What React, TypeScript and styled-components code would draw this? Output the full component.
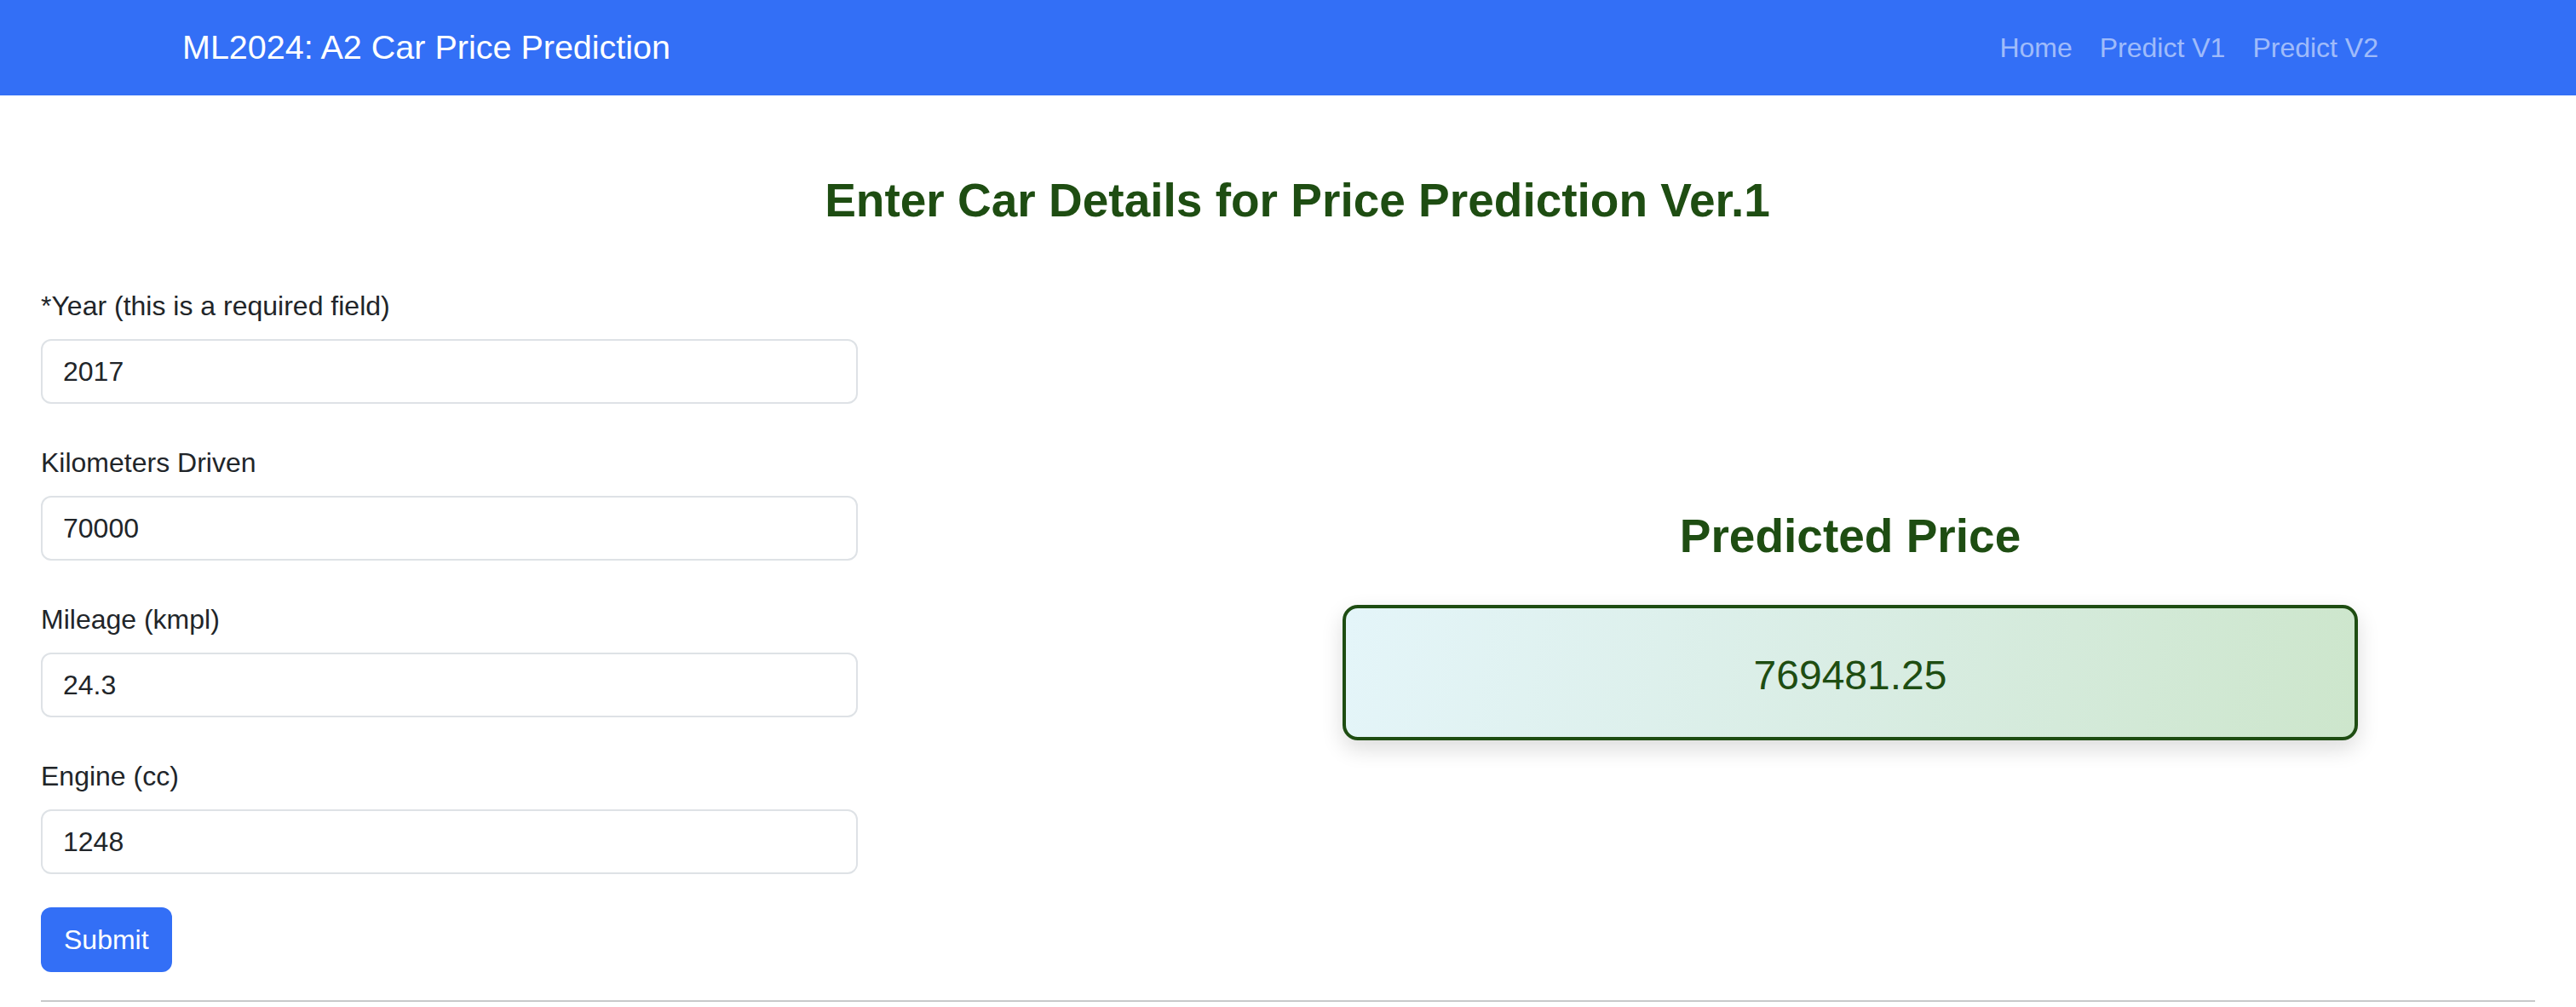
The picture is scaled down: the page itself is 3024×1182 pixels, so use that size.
import React from "react";
import styled, { createGlobalStyle } from "styled-components";

const GlobalStyle = createGlobalStyle`
  html, body {
    margin: 0;
    padding: 0;
    background: #ffffff;
  }
  body {
    font-family: "Liberation Sans", Arial, Helvetica, sans-serif;
    color: #212529;
    font-size: 32px;
    line-height: 1.5;
  }
  * { box-sizing: border-box; }
`;

const Navbar = styled.nav`
  height: 112px;
  background: #336ff6;
  display: flex;
  align-items: center;
`;

const NavContainer = styled.div`
  width: 2640px;
  margin: 0 auto;
  padding: 0 24px;
  display: flex;
  align-items: center;
  justify-content: space-between;
`;

const Brand = styled.a`
  font-size: 39.5px;
  color: #ffffff;
  text-decoration: none;
  line-height: 1.5;
  margin-left: -2px;
`;

const NavList = styled.div`
  display: flex;
  align-items: center;
`;

const NavLink = styled.a`
  font-size: 32px;
  color: rgba(255, 255, 255, 0.55);
  text-decoration: none;
  padding: 0 16px;
  line-height: 1.5;
`;

const Main = styled.main`
  padding: 0 48px;
`;

const Title = styled.h2`
  margin: 90px 0 67px;
  text-align: center;
  font-size: 55px;
  line-height: 1.2;
  font-weight: 700;
  color: #1e4d12;
  padding-left: 22px;
`;

const Row = styled.div`
  display: grid;
  grid-template-columns: 959px 1fr;
  column-gap: 361px;
  align-items: center;
`;

const Form = styled.form`
  display: flex;
  flex-direction: column;
`;

const Field = styled.div`
  display: flex;
  flex-direction: column;
  margin-bottom: 45px;
  &:last-of-type {
    margin-bottom: 39px;
  }
`;

const Label = styled.label`
  font-size: 32px;
  line-height: 48px;
  margin-bottom: 15px;
  color: #212529;
`;

const Input = styled.input`
  height: 76px;
  width: 100%;
  border: 2px solid #dee2e6;
  border-radius: 12px;
  padding: 0 24px;
  font-family: inherit;
  font-size: 32px;
  color: #212529;
  background: #fff;
  outline: none;
`;

const SubmitButton = styled.button`
  align-self: flex-start;
  height: 76px;
  padding: 0 27px;
  border: none;
  border-radius: 12px;
  background: #336ff6;
  color: #ffffff;
  font-family: inherit;
  font-size: 32px;
  cursor: pointer;
`;

const ResultColumn = styled.section`
  display: flex;
  flex-direction: column;
  align-items: center;
  padding-bottom: 11px;
`;

const ResultTitle = styled.h3`
  margin: 0 0 48px;
  font-size: 55px;
  line-height: 1.2;
  font-weight: 700;
  color: #1e4d12;
`;

const ResultBox = styled.div`
  width: 1192px;
  height: 159px;
  border: 4px solid #1e4d12;
  border-radius: 18px;
  background: linear-gradient(100deg, #e4f5f9 0%, #d9ede4 50%, #cde6cc 100%);
  box-shadow: 0 10px 26px rgba(0, 0, 0, 0.14);
  display: flex;
  align-items: center;
  justify-content: center;
  font-size: 48px;
  color: #1e4d12;
  padding-top: 6px;
`;

const Divider = styled.hr`
  margin: 33px 0 0;
  border: none;
  border-top: 2px solid #c8c9ca;
`;

const fields = [
  { id: "year", label: "*Year (this is a required field)", value: "2017" },
  { id: "km", label: "Kilometers Driven", value: "70000" },
  { id: "mileage", label: "Mileage (kmpl)", value: "24.3" },
  { id: "engine", label: "Engine (cc)", value: "1248" },
];

export default function App() {
  return (
    <>
      <GlobalStyle />
      <Navbar>
        <NavContainer>
          <Brand href="#">ML2024: A2 Car Price Prediction</Brand>
          <NavList>
            <NavLink href="#">Home</NavLink>
            <NavLink href="#">Predict V1</NavLink>
            <NavLink href="#">Predict V2</NavLink>
          </NavList>
        </NavContainer>
      </Navbar>
      <Main>
        <Title>Enter Car Details for Price Prediction Ver.1</Title>
        <Row>
          <Form onSubmit={(e) => e.preventDefault()}>
            {fields.map((f) => (
              <Field key={f.id}>
                <Label htmlFor={f.id}>{f.label}</Label>
                <Input id={f.id} defaultValue={f.value} />
              </Field>
            ))}
            <SubmitButton type="submit">Submit</SubmitButton>
          </Form>
          <ResultColumn>
            <ResultTitle>Predicted Price</ResultTitle>
            <ResultBox>769481.25</ResultBox>
          </ResultColumn>
        </Row>
        <Divider />
      </Main>
    </>
  );
}
